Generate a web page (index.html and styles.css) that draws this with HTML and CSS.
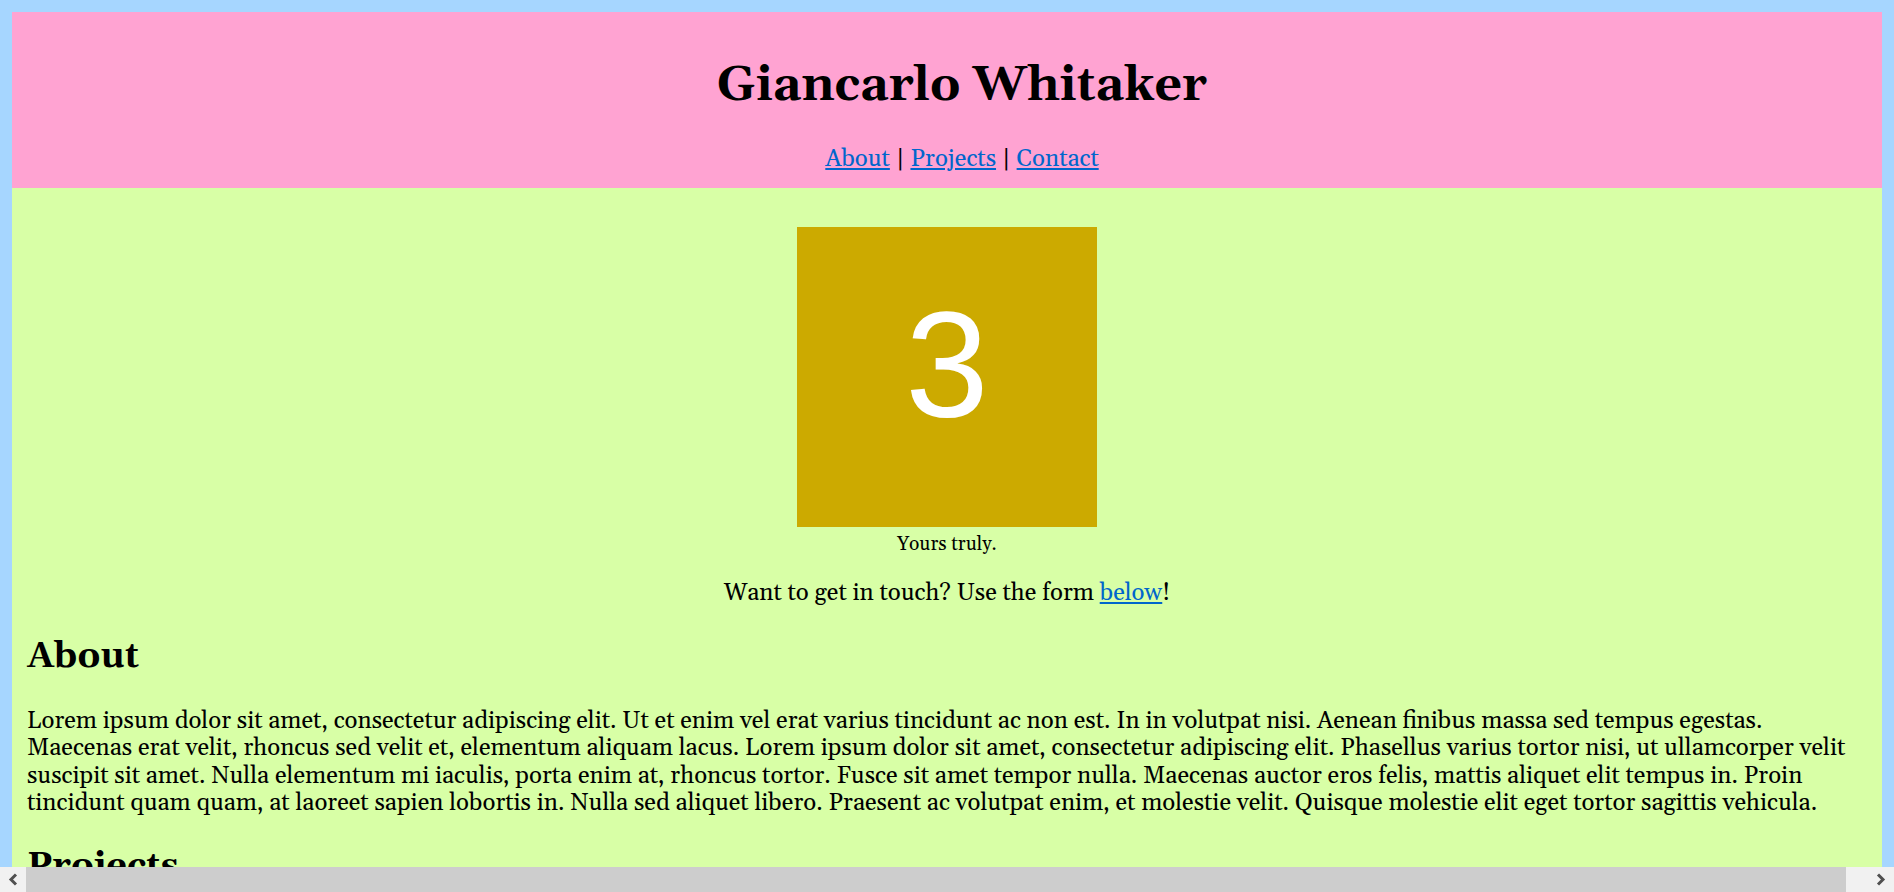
FILE: index.html
```html
<!DOCTYPE html>
<html lang="en">
<head>
<meta charset="utf-8">
<title>Giancarlo Whitaker</title>
<link rel="stylesheet" href="styles.css">
</head>
<body>
<header class="site-header">
  <h1 class="site-title">Giancarlo Whitaker</h1>
  <nav class="site-nav"><a href="#about">About</a> | <a href="#projects">Projects</a> | <a href="#contact">Contact</a></nav>
</header>
<main class="content">
  <figure class="portrait">
    <svg class="portrait-img" width="300" height="300" viewBox="0 0 300 300" xmlns="http://www.w3.org/2000/svg">
      <rect width="300" height="300" fill="#ccaa00"/>
      <text x="150" y="190" text-anchor="middle" class="portrait-digit">3</text>
    </svg>
    <figcaption class="portrait-caption">Yours truly.</figcaption>
  </figure>
  <p class="intro">Want to get in touch? Use the form <a href="#contact">below</a>!</p>
  <section class="section" id="about">
    <h2 class="section-title">About</h2>
    <p>Lorem ipsum dolor sit amet, consectetur adipiscing elit. Ut et enim vel erat varius tincidunt ac non est. In in volutpat nisi. Aenean finibus massa sed tempus egestas. Maecenas erat velit, rhoncus sed velit et, elementum aliquam lacus. Lorem ipsum dolor sit amet, consectetur adipiscing elit. Phasellus varius tortor nisi, ut ullamcorper velit suscipit sit amet. Nulla elementum mi iaculis, porta enim at, rhoncus tortor. Fusce sit amet tempor nulla. Maecenas auctor eros felis, mattis aliquet elit tempus in. Proin tincidunt quam quam, at laoreet sapien lobortis in. Nulla sed aliquet libero. Praesent ac volutpat enim, et molestie velit. Quisque molestie elit eget tortor sagittis vehicula.</p>
  </section>
  <section class="section" id="projects">
    <h2 class="section-title">Projects</h2>
    <p>Curabitur sed augue vitae nunc posuere tincidunt. Donec a felis non lectus facilisis fermentum. Integer at sem vel mi gravida finibus.</p>
  </section>
  <section class="section" id="contact">
    <h2 class="section-title">Contact</h2>
    <p>Send a message and I will get back to you soon.</p>
  </section>
</main>
<div class="hscroll" aria-hidden="true">
  <div class="hscroll-btn">
    <svg width="10" height="13" viewBox="0 0 10 13"><path d="M8 1.5 L3 6.5 L8 11.5" fill="none" stroke="#505050" stroke-width="3"/></svg>
  </div>
  <div class="hscroll-thumb"></div>
  <div class="hscroll-track"></div>
  <div class="hscroll-btn">
    <svg width="10" height="13" viewBox="0 0 10 13"><path d="M2 1.5 L7 6.5 L2 11.5" fill="none" stroke="#505050" stroke-width="3"/></svg>
  </div>
</div>
</body>
</html>
```
FILE: styles.css
```css
html {
  background: #a6d6ff;
  overflow-y: hidden;
}

body {
  margin: 12px;
  font-family: Georgia, Gelasio, "DejaVu Serif", serif;
  font-size: 24px;
  line-height: 1.136;
  color: #000;
}

a {
  color: #0066cc;
}

.site-header {
  width: 100%;
  padding: 15px;
  background: #ffa3d2;
  text-align: center;
}

.site-title {
  font-size: 2em;
  margin: 0.67em 0;
}

.site-nav {
  margin: 0;
}

.content {
  display: block;
  padding: 15px;
  background: #d8ffa6;
}

.portrait {
  margin: 1em 40px;
  text-align: center;
}

.portrait-img {
  display: inline;
}

.portrait-digit {
  font-family: "Liberation Sans", Arial, sans-serif;
  font-size: 150px;
  fill: #ffffff;
}

.portrait-caption {
  font-size: 0.8em;
}

.intro {
  text-align: center;
  margin: 1em 0;
}

.section-title {
  font-size: 1.5em;
  margin: 0.83em 0;
}

.section p {
  margin: 1em 0;
}

.hscroll {
  position: fixed;
  left: 0;
  right: 0;
  bottom: 0;
  height: 25px;
  display: flex;
  background: #f1f1f1;
}

.hscroll-btn {
  width: 26px;
  display: flex;
  align-items: center;
  justify-content: center;
}

.hscroll-thumb {
  flex: 1;
  background: #cdcdcd;
}

.hscroll-track {
  width: 22px;
}
```
